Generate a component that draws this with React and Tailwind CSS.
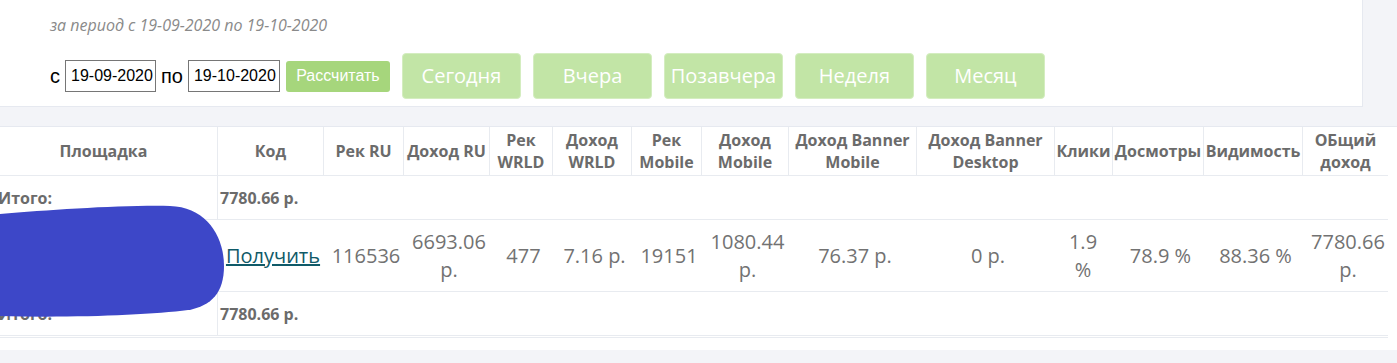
const columns = [
  { title: "Площадка", width: 227 },
  { title: "Код", width: 106 },
  { title: "Рек RU", width: 80 },
  { title: "Доход RU", width: 86 },
  { title: "Рек WRLD", width: 63 },
  { title: "Доход WRLD", width: 79 },
  { title: "Рек Mobile", width: 70 },
  { title: "Доход Mobile", width: 87 },
  { title: "Доход Banner Mobile", width: 128 },
  { title: "Доход Banner Desktop", width: 138 },
  { title: "Клики", width: 58 },
  { title: "Досмотры", width: 91 },
  { title: "Видимость", width: 99 },
  { title: "ОБщий доход", width: 86 },
];

const row = ["116536", "6693.06 р.", "477", "7.16 р.", "19151", "1080.44 р.", "76.37 р.", "0 р.", "1.9 %", "78.9 %", "88.36 %", "7780.66 р."];

const quickButtons = ["Сегодня", "Вчера", "Позавчера", "Неделя", "Месяц"];

const TotalRow = () => (
  <tr>
    <td className="h-[44px] border-b border-[#e8ebf0] pl-[8px] align-middle text-[16px] font-bold text-[#6b6b6b]">Итого:</td>
    <td colSpan={13} className="h-[44px] border-b border-l border-[#e8ebf0] pl-[2px] align-middle text-[16px] font-bold text-[#6b6b6b]">
      7780.66 р.
    </td>
  </tr>
);

export default function App() {
  return (
    <div className="min-h-[363px] w-[1397px] overflow-hidden bg-[#f3f4f8] font-['Open_Sans',sans-serif]">
      {/* period selector card */}
      <div className="h-[107px] w-[1363px] border-r border-b border-[#e6e9f0] bg-white pl-[50px] pt-[14px]">
        <p className="text-[16px] leading-[22px] italic text-[#8a8a8a]">за период с 19-09-2020 по 19-10-2020</p>
        <div className="mt-[17px] flex items-center">
          <div className="flex items-center gap-[5px] font-['Liberation_Sans',Arial,sans-serif]">
            <span className="text-[20px] text-black">с</span>
            <input
              type="text"
              readOnly
              value="19-09-2020"
              className="h-[32px] w-[91px] border border-[#767676] pr-[2px] pl-[5px] text-[16px] text-black outline-none"
            />
            <span className="text-[20px] text-black">по</span>
            <input
              type="text"
              readOnly
              value="19-10-2020"
              className="h-[32px] w-[92px] border border-[#767676] pr-[2px] pl-[5px] text-[16px] text-black outline-none"
            />
            <button className="ml-[1px] h-[31px] w-[104px] rounded-[3px] bg-[#a6d67c] text-[16px] text-white">Рассчитать</button>
          </div>
          <div className="ml-[12px] flex gap-[12px]">
            {quickButtons.map((label) => (
              <button
                key={label}
                className="h-[46px] w-[119px] rounded-[4px] border border-[#d4edc0] bg-[#c2e5a6] text-[20px] text-white"
              >
                {label}
              </button>
            ))}
          </div>
        </div>
      </div>

      {/* report table */}
      <div className="relative mt-[19px] h-[224px] border-t border-[#e6e9f0] bg-white">
        <div className="ml-[-10px] w-[1398px] border-b border-[#e8ebf0] pb-[1px]">
          <table className="w-[1398px] table-fixed border-separate border-spacing-0">
            <colgroup>
              {columns.map((c) => (
                <col key={c.title} style={{ width: c.width }} />
              ))}
            </colgroup>
            <thead>
              <tr>
                {columns.map((c, i) => (
                  <th
                    key={c.title}
                    className={`h-[49px] border-b border-[#e8ebf0] px-[1px] text-center align-middle text-[16px] leading-[22px] font-bold text-[#6b6b6b] ${
                      i > 0 ? "border-l" : ""
                    }`}
                  >
                    {c.title}
                  </th>
                ))}
              </tr>
            </thead>
            <tbody>
              <TotalRow />
              <tr>
                <td className="h-[72px] border-b border-[#e8ebf0]"></td>
                <td className="h-[72px] border-b border-[#e8ebf0] pl-[6px] text-center align-middle text-[20px] leading-[28px] text-[#0f5a68]">
                  <a href="#" className="underline">Получить</a>
                </td>
                {row.map((v, i) => (
                  <td
                    key={i}
                    className={`h-[72px] border-b border-[#e8ebf0] text-center align-middle text-[20px] leading-[28px] text-[#727272] ${
                      i === 8 ? "px-[6px]" : "pl-[6px] pr-0"
                    }`}
                  >
                    {v}
                  </td>
                ))}
              </tr>
              <TotalRow />
            </tbody>
          </table>
        </div>

        {/* hidden site name */}
        <svg className="absolute top-[77px] left-0" width="226" height="120" viewBox="0 0 226 120">
          <path
            d="M0 10 C50 6 120 1 170 2 C206 3 224 32 224 62 C224 88 212 102 188 106 C150 111 70 114 0 112 Z"
            fill="#3d47c8"
          />
        </svg>
      </div>
    </div>
  );
}
